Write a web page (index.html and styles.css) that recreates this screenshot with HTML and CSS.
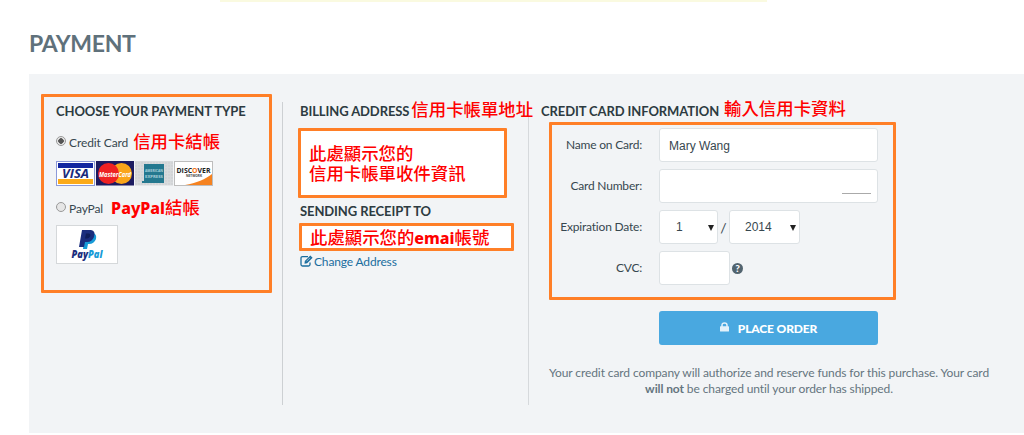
FILE: index.html
```
<!DOCTYPE html>
<html>
<head>
  <meta charset="UTF-8">
  <title>Payment</title>
  <link rel="stylesheet" href="styles.css">
</head>
<body>
  <div class="notice"></div>
  <h1>PAYMENT</h1>

  <div class="panel">
    <div class="col-type">
      <div class="highlight type-box">
        <h3>CHOOSE YOUR PAYMENT TYPE</h3>
        <label class="option">
          <span class="radio checked"></span>
          <span>Credit Card</span>
          <span class="hint">信用卡結帳</span>
        </label>
        <div class="cards">
          <svg width="39" height="25" viewBox="0 0 39 25">
            <rect x=".5" y=".5" width="38" height="24" fill="#fff" stroke="#8d9ad8"/>
            <rect x="2" y="2" width="35" height="5" fill="#1327a0"/>
            <rect x="2" y="18" width="35" height="5" fill="#fbaa19"/>
            <text x="19.5" y="16.5" class="visa" textLength="27" lengthAdjust="spacingAndGlyphs">VISA</text>
          </svg>
          <svg width="38" height="25" viewBox="0 0 38 25">
            <rect width="38" height="24.5" fill="#1c1b60"/>
            <circle cx="25.5" cy="12.5" r="10.5" fill="#faa51a"/>
            <circle cx="12.5" cy="12.5" r="10.5" fill="#ee2123"/>
            <text x="19" y="15.5" class="master" textLength="32" lengthAdjust="spacingAndGlyphs">MasterCard</text>
          </svg>
          <svg width="38" height="25" viewBox="0 0 38 25">
            <rect width="38" height="24.5" fill="#d8dadc"/>
            <path d="M0 2h38M0 5h38M0 8h38M0 11h38M0 14h38M0 17h38M0 20h38M0 23h38" stroke="#cbced1" stroke-dasharray="2 1"/>
            <rect x="9" y="3" width="20" height="19" fill="#24788f"/>
            <text x="19" y="11" class="amex" textLength="18" lengthAdjust="spacingAndGlyphs">AMERICAN</text>
            <text x="19" y="16.5" class="amex" textLength="18" lengthAdjust="spacingAndGlyphs">EXPRESS</text>
            <rect x="7" y="20" width="2" height="2" fill="#24788f"/>
          </svg>
          <svg width="39" height="25" viewBox="0 0 39 25">
            <rect x=".5" y=".5" width="38" height="24" fill="#fff" stroke="#bdbdbd"/>
            <path d="M11 24C22 22 32 18 38 13V24Z" fill="#f58220"/>
            <text x="19.5" y="11.5" class="discover" textLength="34" lengthAdjust="spacingAndGlyphs">DISC<tspan fill="#f47216">O</tspan>VER</text>
            <text x="20" y="15.5" class="network" textLength="16" lengthAdjust="spacingAndGlyphs">NETWORK</text>
          </svg>
        </div>
        <label class="option paypal-option">
          <span class="radio"></span>
          <span>PayPal</span>
          <span class="hint paypal-hint"><b>PayPal</b>結帳</span>
        </label>
        <svg class="paypal" width="62" height="39" viewBox="0 0 62 39">
          <rect x=".5" y=".5" width="61" height="38" fill="#fff" stroke="#d5d8da"/>
          <path d="M29 8H37Q41 9 40 14Q38 19 33 19H32L31 24H27Z" fill="#179bd7"/>
          <path d="M26 5H35Q40 6 38 12Q36 17 31 17H29L28 22H23Z" fill="#1b2d7d"/>
          <path d="M30 8.500H33Q35 9 34 11.500Q33 13.500 31 13.500H29Z" fill="#0f1d5a"/>
          <text x="31" y="33" class="paypal-name" textLength="31" lengthAdjust="spacingAndGlyphs">Pay<tspan fill="#179bd7">Pal</tspan></text>
        </svg>
      </div>
    </div>

    <div class="col-billing">
      <h3>BILLING ADDRESS<span class="hint">信用卡帳單地址</span></h3>
      <div class="highlight address-box hint">
        <div>此處顯示您的</div>
        <div>信用卡帳單收件資訊</div>
      </div>
      <h3 class="receipt-title">SENDING RECEIPT TO</h3>
      <div class="highlight email-box hint">此處顯示您的<b>emai</b>帳號</div>
      <a class="change">
        <svg width="13" height="12" viewBox="0 0 13 12" fill="none" stroke="#1a6d9e">
          <path d="M8 1.700H2.500Q1 1.700 1 3.200V9.500Q1 11 2.500 11H8.500Q10 11 10 9.500V7.500" stroke-width="1.300"/>
          <path d="M4.800 6L10.300 .5L12.600 2.800L7.100 8.300L4.500 8.700Z" fill="#1a6d9e" stroke="none"/>
          <path d="M6.500 6.300L10 2.800" stroke="#f2f4f6" stroke-width=".6"/>
        </svg>
        <span>Change Address</span>
      </a>
    </div>

    <div class="col-card">
      <h3>CREDIT CARD INFORMATION<span class="hint">輸入信用卡資料</span></h3>
      <div class="highlight form-box">
        <div class="row">
          <label>Name on Card:</label>
          <div class="input wide name">Mary Wang</div>
        </div>
        <div class="row">
          <label>Card Number:</label>
          <div class="input wide number"><span class="line"></span></div>
        </div>
        <div class="row">
          <label>Expiration Date:</label>
          <div class="input select month">1<i class="arrow"></i></div>
          <span class="slash">/</span>
          <div class="input select year">2014<i class="arrow"></i></div>
        </div>
        <div class="row">
          <label>CVC:</label>
          <div class="input cvc"></div>
          <span class="help">?</span>
        </div>
      </div>
      <div class="order">
        <svg width="9" height="10" viewBox="0 0 9 10">
          <path d="M2 5V3.200Q2 1 4.500 1Q7 1 7 3.200V5" fill="none" stroke="#e2f1fa" stroke-width="1.500"/>
          <rect y="4.300" width="9" height="5.200" rx=".6" fill="#e2f1fa"/>
        </svg>
        <span>PLACE ORDER</span>
      </div>
      <p class="terms">Your credit card company will authorize and reserve funds for this purchase. Your card<br><b>will not</b> be charged until your order has shipped.</p>
    </div>
  </div>
</body>
</html>
```

FILE: styles.css
```
* {
  box-sizing: border-box;
}
body {
  margin: 0;
  height: 435px;
  overflow: hidden;
  background: #fff;
  color: #37474f;
  font-family: Lato, "Noto Sans CJK TC", sans-serif;
  font-size: 12px;
}
.notice {
  width: 547px;
  height: 2px;
  margin-left: 220px;
  background: #fafae0;
}
h1 {
  margin: 26px 0 0 29px;
  height: 46px;
  font-size: 23px;
  line-height: 31px;
  font-weight: 700;
  letter-spacing: -0.3px;
  color: #5f717b;
}
h3 {
  display: flex;
  margin: 0;
  height: 18px;
  font-size: 13px;
  line-height: 18px;
  font-weight: 700;
  letter-spacing: -0.1px;
  color: #2d3b41;
  white-space: nowrap;
}
.panel {
  display: grid;
  grid-template-columns: 253px 246px 1fr;
  margin-left: 29px;
  height: 359px;
  background: #f2f4f6;
}
.highlight {
  border: 3px solid #ff7f27;
  border-radius: 1px;
}
.hint {
  color: #f00;
  font-family: "Noto Sans CJK TC", sans-serif;
  font-size: 17.4px;
  font-weight: 500;
  letter-spacing: 0;
  white-space: nowrap;
}
.hint b {
  font-family: "Noto Sans", sans-serif;
  font-weight: 800;
  font-size: 16px;
}

/* payment type */
.type-box {
  width: 231px;
  height: 199px;
  margin: 20px 0 0 12px;
  padding: 5px 0 0 12px;
}
.option {
  display: flex;
  align-items: center;
  height: 26px;
  margin-top: 9px;
  letter-spacing: -0.1px;
}
.option .hint {
  margin: -4px 0 0 5px;
}
.radio {
  width: 10px;
  height: 10px;
  margin: -3px 3px 0 0;
  border: 1px solid #999;
  border-radius: 50%;
  background: #e6e6e6;
}
.checked {
  background: radial-gradient(circle, #555 2.5px, #e8e8e8 3px);
}
.cards {
  display: flex;
  gap: 1px;
  height: 25px;
  margin-top: 6px;
}
.paypal-option {
  margin-top: 9px;
}
.option .paypal-hint {
  margin-left: 8px;
}
.paypal {
  display: block;
  margin-top: 4px;
}
svg text {
  font-family: "Open Sans", sans-serif;
  font-weight: 700;
  text-anchor: middle;
}
.visa {
  font-size: 12px;
  font-style: italic;
  fill: #1a2a7c;
}
.master {
  font-size: 7.5px;
  font-style: italic;
  fill: #fff;
}
.amex {
  font-size: 4px;
  fill: #a9d0da;
}
.discover {
  font-size: 7.5px;
  fill: #222;
}
.network {
  font-size: 3px;
  fill: #444;
}
svg .paypal-name {
  font-size: 10px;
  font-style: italic;
  font-weight: 800;
  fill: #1b2d7d;
}

/* billing */
.col-billing, .col-card {
  height: 303px;
  margin-top: 28px;
  border-left: 1px solid #cdd0d3;
}
.col-billing {
  position: relative;
  z-index: 1;
  padding-left: 15px;
}
.col-billing h3 {
  padding-left: 2px;
}
.col-billing h3 .hint {
  margin: -2px 0 0 2px;
}
.address-box {
  width: 209px;
  height: 70px;
  margin-top: 8px;
  padding: 12px 0 0 8px;
  line-height: 20px;
  background: #fff;
}
.col-billing .receipt-title {
  margin-top: 4px;
}
.email-box {
  width: 215px;
  height: 28px;
  margin: 3px 0 0 1px;
  padding-left: 8px;
  line-height: 22px;
  background: #fff;
}
.change {
  display: flex;
  align-items: center;
  gap: 1px;
  height: 20px;
  margin-left: 2px;
  letter-spacing: -0.15px;
  color: #1a6d9e;
}

/* card form */
.col-card {
  border-left-color: #d6d9dc;
}
.col-card h3 {
  margin-left: 12px;
}
.col-card h3 .hint {
  margin: -3px 0 0 5px;
}
.form-box {
  width: 347px;
  height: 178px;
  margin: 2px 0 0 20px;
  padding-top: 3px;
}
.row {
  display: flex;
  align-items: center;
  height: 34px;
  margin-bottom: 7px;
}
.row label {
  width: 90px;
  margin: -2px 17px 0 0;
  text-align: right;
  letter-spacing: -0.2px;
  white-space: nowrap;
}
.input {
  height: 34px;
  border: 1px solid #dde2e5;
  border-radius: 3px;
  background: #fff;
  font-family: "Liberation Sans", sans-serif;
  line-height: 34px;
}
.wide {
  width: 219px;
}
.name {
  padding-left: 9px;
}
.number {
  display: flex;
  align-items: flex-end;
  justify-content: flex-end;
  padding: 0 6px 8px 0;
}
.line {
  width: 29px;
  height: 1px;
  background: #aaa;
}
.select {
  display: flex;
  align-items: center;
  justify-content: space-between;
  padding: 0 3px 0 16px;
}
.month {
  width: 59px;
}
.year {
  width: 71px;
  padding-left: 15px;
}
.arrow {
  margin-top: 2px;
  border: 3.5px solid transparent;
  border-top: 6px solid #222;
  border-bottom: 0;
}
.slash {
  width: 11px;
  text-align: center;
  font-size: 14px;
}
.cvc {
  width: 71px;
}
.help {
  width: 11px;
  height: 11px;
  margin-left: 2px;
  border-radius: 50%;
  background: #52646f;
  color: #fff;
  font-size: 10px;
  font-weight: 900;
  line-height: 11px;
  text-align: center;
}
.order {
  display: flex;
  align-items: center;
  justify-content: center;
  gap: 9px;
  width: 219px;
  height: 34px;
  margin: 11px 0 0 130px;
  border-radius: 3px;
  background: #49a8e0;
  color: #fff;
  font-weight: 900;
  letter-spacing: -0.15px;
}
.order svg {
  margin-top: -2px;
}
.terms {
  width: 480px;
  margin: 20px 0 0;
  color: #65757e;
  line-height: 15.5px;
  letter-spacing: -0.1px;
  text-align: center;
  white-space: nowrap;
}
```
